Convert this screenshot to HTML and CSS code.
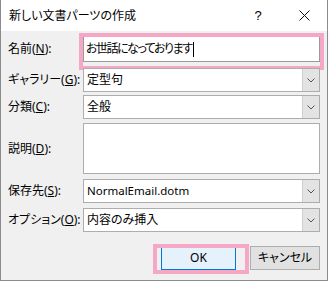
FILE: index.html
```html
<!DOCTYPE html>
<html lang="ja">
<head>
<meta charset="utf-8">
<title>新しい文書パーツの作成</title>
<link rel="stylesheet" href="styles.css">
</head>
<body>
<div class="window">
  <div class="titlebar">
    <span class="title">新しい文書パーツの作成</span>
    <span class="cap help">?</span>
    <span class="cap close"><svg width="11" height="11" viewBox="0 0 11 11"><path d="M0.5 0.5L10.5 10.5M10.5 0.5L0.5 10.5" stroke="#111" stroke-width="1" fill="none"/></svg></span>
  </div>
  <div class="content">
    <div class="row r-name">
      <span class="lbl">名前(<u>N</u>):</span>
      <div class="field name"><span class="typed">お世話になっております</span><span class="caret"></span><span class="hl hl-name"></span></div>
    </div>
    <div class="row r-gal">
      <span class="lbl">ギャラリー(<u>G</u>):</span>
      <div class="field combo"><span class="val">定型句</span><span class="dd"><svg width="8" height="5" viewBox="0 0 8 5"><polyline points="0.5,0.5 4,4 7.5,0.5" fill="none" stroke="#555" stroke-width="1"/></svg></span></div>
    </div>
    <div class="row r-cls">
      <span class="lbl">分類(<u>C</u>):</span>
      <div class="field combo"><span class="val">全般</span><span class="dd"><svg width="8" height="5" viewBox="0 0 8 5"><polyline points="0.5,0.5 4,4 7.5,0.5" fill="none" stroke="#555" stroke-width="1"/></svg></span></div>
    </div>
    <div class="row r-desc">
      <span class="lbl">説明(<u>D</u>):</span>
      <div class="field area"></div>
    </div>
    <div class="row r-save">
      <span class="lbl">保存先(<u>S</u>):</span>
      <div class="field combo"><span class="val latin">NormalEmail.dotm</span><span class="dd"><svg width="8" height="5" viewBox="0 0 8 5"><polyline points="0.5,0.5 4,4 7.5,0.5" fill="none" stroke="#555" stroke-width="1"/></svg></span></div>
    </div>
    <div class="row r-opt">
      <span class="lbl">オプション(<u>O</u>):</span>
      <div class="field combo"><span class="val">内容のみ挿入</span><span class="dd"><svg width="8" height="5" viewBox="0 0 8 5"><polyline points="0.5,0.5 4,4 7.5,0.5" fill="none" stroke="#555" stroke-width="1"/></svg></span></div>
    </div>
    <div class="buttons">
      <div class="btn ok">OK<span class="hl hl-ok"></span></div>
      <div class="btn cancel">キャンセル</div>
    </div>
  </div>
</div>
</body>
</html>
```
FILE: styles.css
```css
* { box-sizing: border-box; }
html, body { margin: 0; padding: 0; }
body {
  width: 328px;
  height: 281px;
  overflow: hidden;
  font-family: "Noto Sans", "Noto Sans CJK JP", sans-serif;
  font-size: 12px;
  color: #000;
  font-feature-settings: "palt";
  background: #f0f0f0;
}
.window {
  width: 328px;
  height: 281px;
  border: 1px solid #8c8c8c;
  border-top: none;
  background: #f0f0f0;
}
.titlebar {
  height: 31px;
  background: #fff;
  display: flex;
  align-items: center;
}
.title {
  flex: 1;
  padding-left: 8px;
  line-height: 1;
}
.cap {
  width: 46px;
  height: 31px;
  display: flex;
  align-items: center;
  justify-content: center;
}
.help {
  font-size: 13px;
  font-family: "Liberation Sans", sans-serif;
}
.content {
  padding: 5px 6px 0 7px;
  display: flex;
  flex-direction: column;
}
.row {
  display: flex;
  align-items: center;
}
.lbl {
  width: 75px;
  white-space: nowrap;
  line-height: 1;
}
.lbl u { text-underline-offset: 1px; }
.field {
  width: 237px;
  height: 24px;
  border: 1px solid #adadad;
  background: #fff;
  display: flex;
  align-items: center;
  padding-left: 3px;
  position: relative;
  line-height: 1;
}
.name {
  height: 26px;
  border-color: #9a9a9a;
  padding-left: 2px;
}
.typed { letter-spacing: -1.5px; }
.caret {
  display: inline-block;
  width: 1px;
  height: 15px;
  background: #000;
  margin-left: 2px;
}
.combo .val { flex: 1; }
.latin { font-family: "Noto Sans", sans-serif; font-size: 11.5px; }
.dd {
  width: 17px;
  height: 22px;
  background: #e3e3e3;
  border-left: 1px solid #cfcfcf;
  display: flex;
  align-items: center;
  justify-content: center;
}
.area { height: 51px; }
.r-gal { margin-top: 6px; }
.r-cls { margin-top: 3px; }
.r-desc { margin-top: 4px; }
.r-save { margin-top: 5px; }
.r-opt { margin-top: 5px; }
.buttons {
  margin-top: 14px;
  display: flex;
  justify-content: flex-end;
  gap: 14px;
  padding-right: 1px;
}
.btn {
  height: 24px;
  display: flex;
  align-items: center;
  justify-content: center;
  position: relative;
  line-height: 1;
}
.ok {
  width: 75px;
  background: #e5f1fb;
  border: 1px solid #0078d7;
}
.cancel {
  width: 70px;
  background: #e1e1e1;
  border: 1px solid #adadad;
}
.hl {
  position: absolute;
  border: 4px solid #f4a8c6;
  pointer-events: none;
}
.hl-name {
  left: -5px;
  top: -4px;
  width: 245px;
  height: 37px;
}
.hl-ok {
  left: -9px;
  top: -3px;
  width: 96px;
  height: 30px;
}
```
